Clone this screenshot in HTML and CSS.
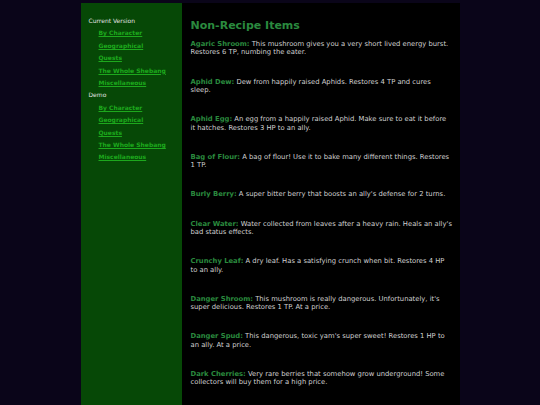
FILE: index.html
```html
<!DOCTYPE html>
<html>
<head>
<meta charset="utf-8">
<link rel="stylesheet" href="styles.css">
</head>
<body>
<div class="page">
  <nav class="sidebar">
    <ul class="menu">
      <li class="group">Current Version
        <ul class="sub">
          <li><a href="#">By Character</a></li>
          <li><a href="#">Geographical</a></li>
          <li><a href="#">Quests</a></li>
          <li><a href="#">The Whole Shebang</a></li>
          <li><a href="#">Miscellaneous</a></li>
        </ul>
      </li>
      <li class="group">Demo
        <ul class="sub">
          <li><a href="#">By Character</a></li>
          <li><a href="#">Geographical</a></li>
          <li><a href="#">Quests</a></li>
          <li><a href="#">The Whole Shebang</a></li>
          <li><a href="#">Miscellaneous</a></li>
        </ul>
      </li>
    </ul>
  </nav>
  <main class="content">
    <h1 class="title">Non-Recipe Items</h1>
    <p class="item"><b class="name">Agaric Shroom:</b> This mushroom gives you a very short lived energy burst. Restores 6 TP, numbing the eater.</p>
    <p class="item"><b class="name">Aphid Dew:</b> Dew from happily raised Aphids. Restores 4 TP and cures sleep.</p>
    <p class="item"><b class="name">Aphid Egg:</b> An egg from a happily raised Aphid. Make sure to eat it before it hatches. Restores 3 HP to an ally.</p>
    <p class="item"><b class="name">Bag of Flour:</b> A bag of flour! Use it to bake many different things. Restores 1 TP.</p>
    <p class="item"><b class="name">Burly Berry:</b> A super bitter berry that boosts an ally's defense for 2 turns.</p>
    <p class="item"><b class="name">Clear Water:</b> Water collected from leaves after a heavy rain. Heals an ally's bad status effects.</p>
    <p class="item"><b class="name">Crunchy Leaf:</b> A dry leaf. Has a satisfying crunch when bit. Restores 4 HP to an ally.</p>
    <p class="item"><b class="name">Danger Shroom:</b> This mushroom is really dangerous. Unfortunately, it's super delicious. Restores 1 TP. At a price.</p>
    <p class="item"><b class="name">Danger Spud:</b> This dangerous, toxic yam's super sweet! Restores 1 HP to an ally. At a price.</p>
    <p class="item"><b class="name">Dark Cherries:</b> Very rare berries that somehow grow underground! Some collectors will buy them for a high price.</p>
  </main>
</div>
</body>
</html>
```
FILE: styles.css
```css
html, body {
  margin: 0;
  padding: 0;
  background: #0a0519;
  font-family: "DejaVu Sans", Verdana, sans-serif;
}
.page {
  width: 379px;
  margin: 3px auto 0;
  display: flex;
  min-height: 402px;
}
.sidebar {
  width: 101px;
  flex: none;
  background: #064806;
  padding-top: 12px;
}
.menu, .sub {
  list-style: none;
  margin: 0;
  padding: 0;
}
.group {
  color: #e0e0e0;
  font-size: 6px;
  line-height: 12.4px;
  padding-left: 8px;
}
.sub {
  padding-left: 10px;
}
.sub a {
  color: #1da81d;
  font-weight: bold;
  text-decoration: underline;
}
.content {
  flex: 1;
  background: #000;
  padding: 15px 7px 0 9px;
  color: #d0d0d0;
  font-size: 6.8px;
  line-height: 8.4px;
}
.title {
  margin: 0 0 6px;
  font-size: 11px;
  line-height: 16px;
  color: #2a8a3e;
}
.item {
  margin: 0 0 20.8px;
}
.name {
  color: #2a8a3e;
}
```
